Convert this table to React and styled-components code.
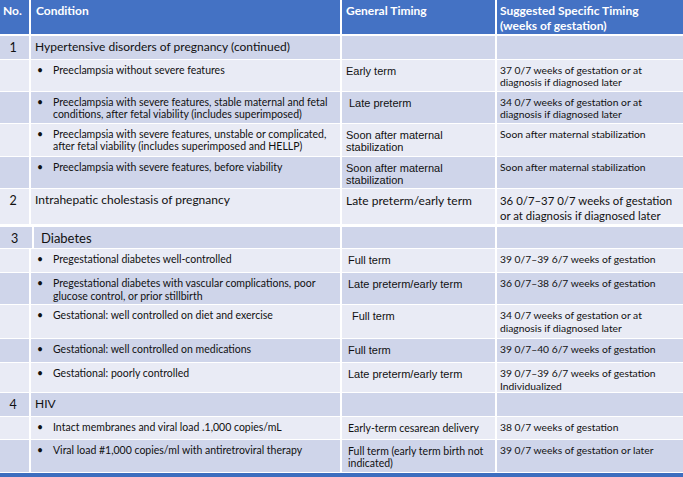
import React from "react";
import styled, { createGlobalStyle } from "styled-components";

const GlobalStyle = createGlobalStyle`
  html, body {
    margin: 0;
    padding: 0;
    background: #ffffff;
  }
`;

const CALIBRI = `"Lato", "Open Sans", sans-serif`;
const ARIAL = `"Liberation Sans", Arial, sans-serif`;

// rows of the table, lines are kept as in the slide
const rows = [
  { no: "1", title: "Hypertensive disorders of pregnancy (continued)", tone: "dark", h: 23 },
  {
    cond: ["Preeclampsia without severe features"],
    general: ["Early term"],
    suggested: ["37 0/7 weeks of gestation or at", "diagnosis if diagnosed later"],
    tone: "light",
    h: 31,
  },
  {
    cond: ["Preeclampsia with severe features, stable maternal and fetal", "conditions, after fetal viability (includes superimposed)"],
    general: ["Late preterm"],
    indent: 3,
    suggested: ["34 0/7 weeks of gestation or at", "diagnosis if diagnosed later"],
    tone: "dark",
    h: 31,
  },
  {
    cond: ["Preeclampsia with severe features, unstable or complicated,", "after fetal viability (includes superimposed and HELLP)"],
    general: ["Soon after maternal", "stabilization"],
    suggested: ["Soon after maternal stabilization"],
    tone: "light",
    h: 32,
  },
  {
    cond: ["Preeclampsia with severe features, before viability"],
    general: ["Soon after maternal", "stabilization"],
    suggested: ["Soon after maternal stabilization"],
    tone: "dark",
    h: 31,
  },
  {
    no: "2",
    title: "Intrahepatic cholestasis of pregnancy",
    general: ["Late preterm/early term"],
    generalFont: "calibri",
    big: true,
    suggested: ["36 0/7–37 0/7 weeks of gestation", "or at diagnosis if diagnosed later"],
    tone: "light",
    h: 36,
    gapAfter: 3,
  },
  { no: "3", title: "Diabetes", tone: "dark", h: 21, wide: true, large: true },
  {
    cond: ["Pregestational diabetes well-controlled"],
    general: ["Full term"],
    indent: 2,
    suggested: ["39 0/7–39 6/7 weeks of gestation"],
    tone: "light",
    h: 23,
  },
  {
    cond: ["Pregestational diabetes with vascular complications, poor", "glucose control, or prior stillbirth"],
    general: ["Late preterm/early term"],
    indent: 2,
    suggested: ["36 0/7–38 6/7 weeks of gestation"],
    tone: "dark",
    h: 31,
  },
  {
    cond: ["Gestational: well controlled on diet and exercise"],
    general: ["Full term"],
    indent: 6,
    suggested: ["34 0/7 weeks of gestation or at", "diagnosis if diagnosed later"],
    tone: "light",
    h: 33,
  },
  {
    cond: ["Gestational: well controlled on medications"],
    general: ["Full term"],
    indent: 2,
    suggested: ["39 0/7–40 6/7 weeks of gestation"],
    tone: "dark",
    h: 23,
  },
  {
    cond: ["Gestational: poorly controlled"],
    general: ["Late preterm/early term"],
    indent: 2,
    suggested: ["39 0/7–39 6/7 weeks of gestation", "Individualized"],
    tone: "light",
    h: 29,
  },
  { no: "4", title: "HIV", tone: "dark", h: 23 },
  {
    cond: ["Intact membranes and viral load .1,000 copies/mL"],
    general: ["Early-term cesarean delivery"],
    generalFont: "calibri",
    indent: 2,
    suggested: ["38 0/7 weeks of gestation"],
    tone: "light",
    h: 22,
  },
  {
    cond: ["Viral load #1,000 copies/ml with antiretroviral therapy"],
    general: ["Full term (early term birth not", "indicated)"],
    generalFont: "calibri",
    indent: 2,
    suggested: ["39 0/7 weeks of gestation or later"],
    tone: "dark",
    h: 32,
  },
];

const Lines = ({ lines }) =>
  lines.map((line, i) => (
    <React.Fragment key={i}>
      {i > 0 && <br />}
      {line}
    </React.Fragment>
  ));

export default function App() {
  return (
    <>
      <GlobalStyle />
      <Table>
        <HeaderRow>
          <HeadCell>No.</HeadCell>
          <HeadCell $pad={5}>Condition</HeadCell>
          <HeadCell $pad={4}>General Timing</HeadCell>
          <HeadCell $pad={3}>
            Suggested Specific Timing
            <br />
            (weeks of gestation)
          </HeadCell>
        </HeaderRow>
        {rows.map((r, i) => (
          <Row key={i} $h={r.h} $wide={r.wide} $gap={r.gapAfter || 1}>
            <NoCell $tone={r.tone}>{r.no}</NoCell>
            <CondCell $tone={r.tone} $section={!!r.title}>
              {r.title ? (
                <Title $large={r.large}>{r.title}</Title>
              ) : (
                <Bullet>
                  <Dot>•</Dot>
                  <span>
                    <Lines lines={r.cond} />
                  </span>
                </Bullet>
              )}
            </CondCell>
            <GeneralCell
              $tone={r.tone}
              $font={r.generalFont}
              $big={r.big}
              $indent={r.indent || 0}
            >
              {r.general && <Lines lines={r.general} />}
            </GeneralCell>
            <SuggestCell $tone={r.tone} $big={r.big}>
              {r.suggested && <Lines lines={r.suggested} />}
            </SuggestCell>
          </Row>
        ))}
        <BottomBar />
      </Table>
    </>
  );
}

const Table = styled.div`
  width: 683px;
  height: 477px;
  overflow: hidden;
  background: #ffffff;
  display: flex;
  flex-direction: column;
  color: #111111;
`;

const HeaderRow = styled.div`
  display: grid;
  grid-template-columns: 29px 309px 153px 1fr;
  column-gap: 2px;
  height: 34px;
  margin-bottom: 2px;
  background: #ffffff;
`;

const HeadCell = styled.div`
  background: #4472c4;
  color: #ffffff;
  font-family: ${CALIBRI};
  font-weight: 700;
  font-size: 12px;
  line-height: 15px;
  padding: 3px 0 0 ${(p) => p.$pad ?? 3}px;
  white-space: nowrap;
`;

const Row = styled.div`
  display: grid;
  grid-template-columns: ${(p) => (p.$wide ? "32px 306px" : "29px 309px")} 153px 1fr;
  column-gap: 2px;
  height: ${(p) => p.$h}px;
  margin-bottom: ${(p) => p.$gap}px;
`;

const toneBg = (p) => (p.$tone === "dark" ? "#cfd5ea" : "#e9ebf5");

const Cell = styled.div`
  background: ${toneBg};
  white-space: nowrap;
  overflow: hidden;
`;

const NoCell = styled(Cell)`
  font-family: ${CALIBRI};
  font-size: 12.5px;
  display: flex;
  justify-content: center;
  padding-top: 4px;
  padding-right: 3px;
`;

const CondCell = styled(Cell)`
  padding: ${(p) => (p.$section ? "3px 0 0 4px" : "4px 0 0 6px")};
`;

const Title = styled.div`
  font-family: ${CALIBRI};
  font-size: ${(p) => (p.$large ? "13px" : "12px")};
  line-height: 16px;
  padding-left: ${(p) => (p.$large ? "3px" : "0")};
`;

const Bullet = styled.div`
  display: flex;
  font-family: ${CALIBRI};
  font-size: 10.5px;
  line-height: 12.5px;
`;

const Dot = styled.span`
  width: 16px;
  flex: none;
`;

const GeneralCell = styled(Cell)`
  font-family: ${(p) => (p.$font === "calibri" ? CALIBRI : ARIAL)};
  font-size: ${(p) => (p.$big ? "12px" : p.$font === "calibri" ? "10.5px" : "11px")};
  line-height: ${(p) => (p.$big ? "15px" : "12px")};
  padding: ${(p) => (p.$big ? "4px" : "5px")} 0 0 ${(p) => 4 + p.$indent}px;
`;

const SuggestCell = styled(Cell)`
  font-family: ${CALIBRI};
  font-size: ${(p) => (p.$big ? "11.4px" : "10.3px")};
  line-height: ${(p) => (p.$big ? "15px" : "12.5px")};
  padding: 4px 0 0 3px;
`;

const BottomBar = styled.div`
  height: 4px;
  background: #3d6ebf;
`;
